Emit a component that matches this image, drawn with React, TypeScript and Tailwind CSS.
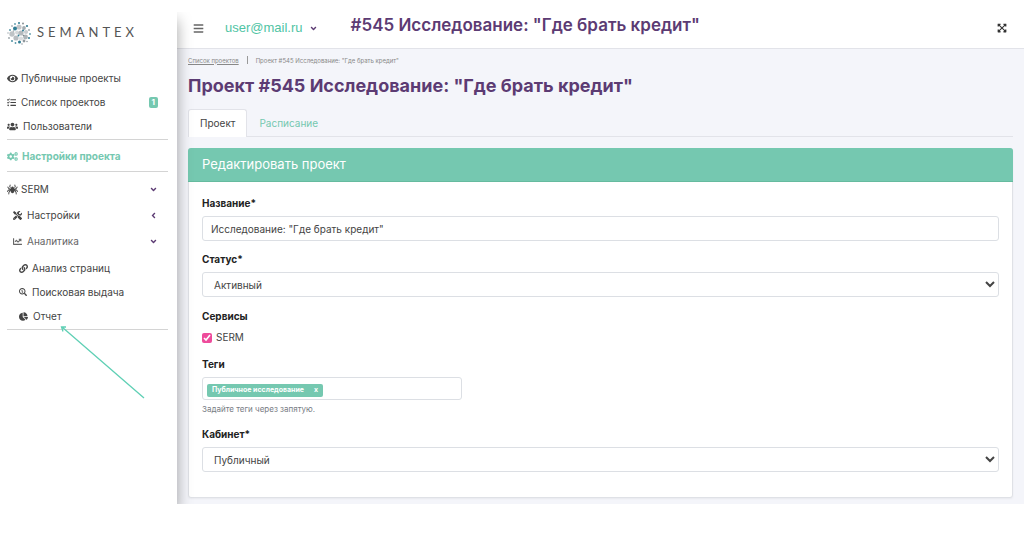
import React, { useState } from "react";
import {
  FaAngleDown,
  FaAngleLeft,
  FaBars,
  FaChartLine,
  FaChartPie,
  FaCogs,
  FaExpandArrowsAlt,
  FaEye,
  FaLink,
  FaSearchDollar,
  FaSpider,
  FaTasks,
  FaTools,
  FaUsers,
} from "react-icons/fa";

const projectName = 'Исследование: "Где брать кредит"';

// [x, y, radius, color]
const logoDots: [number, number, number, string][] = [
  [12, 6, 2.6, "#c3c6c9"],
  [17, 7, 1.9, "#a5adb1"],
  [8, 7.5, 2, "#2f7c93"],
  [5, 13, 2.7, "#bfc3c6"],
  [10, 11.5, 1.9, "#d5d8da"],
  [14, 12, 2.6, "#b4b9bd"],
  [19, 11, 2.1, "#c9cccf"],
  [9, 17, 2.6, "#b9bdc1"],
  [14, 17.5, 2.1, "#dadcde"],
  [18.5, 16, 2.4, "#aeb4b8"],
  [12.5, 21, 1.5, "#2f7c93"],
  [17, 20, 1.4, "#8f989d"],
  [12, 2, 1, "#2f7c93"],
  [16, 2.5, 0.9, "#7d878c"],
  [8, 3, 0.9, "#5b98a9"],
  [5, 5, 0.8, "#7d878c"],
  [20, 5, 1.1, "#2f7c93"],
  [3, 9, 1, "#5b98a9"],
  [22, 9, 0.9, "#9aa3a8"],
  [23, 13, 0.9, "#5b98a9"],
  [1, 12, 0.7, "#9aa3a8"],
  [2, 17, 0.9, "#9aa3a8"],
  [22, 17, 1, "#2f7c93"],
  [5, 20, 1.1, "#5b98a9"],
  [20, 20.5, 0.8, "#9aa3a8"],
  [8.5, 22, 0.9, "#5b98a9"],
  [15, 23, 0.8, "#9aa3a8"],
  [16, 9.5, 1, "#2f7c93"],
  [11.5, 14.5, 0.9, "#2f7c93"],
  [16.5, 14.5, 0.8, "#7d878c"],
  [6.5, 10, 0.8, "#9aa3a8"],
];

const Logo = () => (
  <div className="flex h-[42px] items-center gap-1.5">
    <svg viewBox="0 0 24 24" className="h-6 w-6">
      {logoDots.map(([x, y, r, color], index) => (
        <circle key={index} cx={x} cy={y} r={r} fill={color} />
      ))}
    </svg>
    <div className="flex gap-1 font-['Lato'] text-[13px] text-[#555]">
      {"SEMANTEX".split("").map((letter, index) => (
        <span key={index}>{letter}</span>
      ))}
    </div>
  </div>
);

type ItemProps = {
  icon: React.ReactNode;
  label: string;
  className: string;
  children?: React.ReactNode;
};

const Item = ({ icon, label, className, children }: ItemProps) => (
  <li>
    <a href="#" className={"flex items-center pr-2.5 " + className}>
      {icon}
      <span className="grow">{label}</span>
      {children}
    </a>
  </li>
);

const Sidebar = () => (
  <aside className="relative z-10 w-[177px] shrink-0 bg-white pr-[9px] pl-[7px] shadow-[0_8px_14px_rgba(0,0,0,0.36)]">
    <Logo />
    <nav className="pt-3 text-[#444]">
      <ul className="border-b border-[#d4d4d4] pb-px">
        <Item icon={<FaEye size={11} />} label="Публичные проекты" className="h-6 gap-[3px]" />
        <Item icon={<FaTasks size={9} />} label="Список проектов" className="h-6 gap-[5px]">
          <span className="rounded-xs bg-[#75c8b0] px-[3px] text-[8px] leading-[11px] font-bold text-white">1</span>
        </Item>
        <Item icon={<FaUsers size={11} />} label="Пользователи" className="h-6 gap-[5px]" />
      </ul>
      <ul className="border-b border-[#d4d4d4] pt-px">
        <Item
          icon={<FaCogs size={11} />}
          label="Настройки проекта"
          className="h-[30px] gap-1 font-bold text-[#75c8b0]"
        />
      </ul>
      <ul className="border-b border-[#d4d4d4] pt-1 pb-px">
        <Item icon={<FaSpider size={11} />} label="SERM" className="h-[26px] gap-[3px]">
          <FaAngleDown size={9} className="text-[#5c3b73]" />
        </Item>
        <Item icon={<FaTools size={9} />} label="Настройки" className="h-[26px] gap-[5px] pl-1.5">
          <FaAngleLeft size={9} className="text-[#5c3b73]" />
        </Item>
        <Item icon={<FaChartLine size={9} />} label="Аналитика" className="h-[26px] gap-[5px] pl-1.5 text-[#666]">
          <FaAngleDown size={9} className="text-[#5c3b73]" />
        </Item>
        <li>
          <ul className="pt-0.5 pl-3">
            <Item icon={<FaLink size={9} />} label="Анализ страниц" className="h-6 gap-1" />
            <Item icon={<FaSearchDollar size={8} />} label="Поисковая выдача" className="h-6 gap-[5px]" />
            <Item icon={<FaChartPie size={9} />} label="Отчет" className="h-6 gap-[5px]" />
          </ul>
        </li>
      </ul>
    </nav>
  </aside>
);

const Topbar = () => (
  <header className="flex h-[37px] items-center border-b border-[#e2e3e9] bg-white pr-[17px] pb-1 pl-4">
    <button aria-label="Меню" className="text-[#666]">
      <FaBars size={11} />
    </button>
    <button className="ml-[21px] flex items-center gap-1.5 font-['Liberation_Sans'] text-[13px] text-[#4fc4a4]">
      user@mail.ru
      <FaAngleDown size={9} className="text-[#5c3b73]" />
    </button>
    <div className="grow pb-1 pl-[33px] text-[17px] font-semibold text-[#5c3b73]">#545 {projectName}</div>
    <button aria-label="На весь экран" className="text-[#333]">
      <FaExpandArrowsAlt size={10} />
    </button>
  </header>
);

const controlClass =
  "mt-1.5 block h-[25px] w-full rounded-[3px] border border-[#dcdfe4] bg-white text-[10px] text-[#444] outline-none";

const labelClass = "block h-[13px] leading-[13px] font-bold text-[#222]";

const ProjectForm = () => {
  const [name, setName] = useState(projectName);
  const [serm, setSerm] = useState(true);
  const [tags, setTags] = useState(["Публичное исследование"]);

  return (
    <form className="flex flex-col px-[13px] pt-[15px] pb-[25px]">
      <label htmlFor="name" className={labelClass}>
        Название*
      </label>
      <input
        id="name"
        className={controlClass + " px-2"}
        value={name}
        onChange={(e) => setName(e.target.value)}
      />

      <label htmlFor="status" className={labelClass + " mt-3"}>
        Статус*
      </label>
      <select id="status" className={controlClass + " pl-[7px]"}>
        <option>Активный</option>
      </select>

      <fieldset className="mt-[13px]">
        <legend className={labelClass}>Сервисы</legend>
        <label className="mt-2 flex h-[13px] items-center gap-1">
          <input
            type="checkbox"
            className="h-2.5 w-2.5 accent-[#ee4b9b]"
            checked={serm}
            onChange={(e) => setSerm(e.target.checked)}
          />
          SERM
        </label>
      </fieldset>

      <label htmlFor="tags" className={labelClass + " mt-3.5"}>
        Теги
      </label>
      <div className="mt-1.5 flex h-[23px] w-[260px] items-center rounded-[3px] border border-[#dcdfe4] px-1 pt-[3px]">
        {tags.map((tag) => (
          <span
            key={tag}
            className="flex h-[13px] shrink-0 items-center gap-2.5 rounded-xs bg-[#75c8b0] px-[5px] text-[7px] font-bold text-white"
          >
            {tag}
            <button type="button" onClick={() => setTags(tags.filter((t) => t !== tag))}>
              x
            </button>
          </span>
        ))}
        <input id="tags" className="min-w-0 grow px-1 outline-none" />
      </div>
      <small className="mt-1 text-[8px] leading-[10px] text-[#777c84]">Задайте теги через запятую.</small>

      <label htmlFor="cabinet" className={labelClass + " mt-3.5"}>
        Кабинет*
      </label>
      <select id="cabinet" className={controlClass + " pl-[7px]"}>
        <option>Публичный</option>
      </select>
    </form>
  );
};

const App = () => {
  return (
    <div className="relative min-h-screen bg-white pt-3 font-['Inter',sans-serif] text-[10px] text-[#444]">
      <div className="flex overflow-hidden">
        <Sidebar />
        <div className="min-w-0 grow bg-[#f4f5fa]">
          <Topbar />
          <main className="px-[11px] pb-1.5">
            <div className="flex h-[22px] items-center gap-2 text-[6px] text-[#888]">
              <a href="#" className="underline">
                Список проектов
              </a>
              <span className="h-2 w-px bg-[#999]" />
              <span>Проект #545 {projectName}</span>
            </div>
            <h1 className="h-[38px] pt-0.5 text-[18px] leading-[26px] font-bold text-[#5c3b73]">
              Проект #545 {projectName}
            </h1>
            <div className="flex h-7 border-b border-[#e2e3e9]">
              <button className="-mb-px rounded-t-[3px] border border-b-0 border-[#e2e3e9] bg-white px-[11px]">
                Проект
              </button>
              <button className="px-3 pt-0.5 text-[#75c8b0]">Расписание</button>
            </div>
            <section className="mt-[11px] rounded-[3px] border border-[#dfe1e6] bg-white shadow-xs">
              <h2 className="-mx-px -mt-px h-[34px] rounded-t-[3px] border-b border-[#66bb9f] bg-[#75c8b0] px-3.5 text-[13px] leading-[33px] text-white">
                Редактировать проект
              </h2>
              <ProjectForm />
            </section>
          </main>
        </div>
      </div>
      {/* pointer to the report item */}
      <svg className="absolute top-[325px] left-[60px] z-20" width="86" height="74" fill="none" stroke="#5fd0b5">
        <path d="M84 73L2 2M6 2H1.500L3 6.500" strokeWidth="1.300" />
      </svg>
    </div>
  );
};

export default App;
